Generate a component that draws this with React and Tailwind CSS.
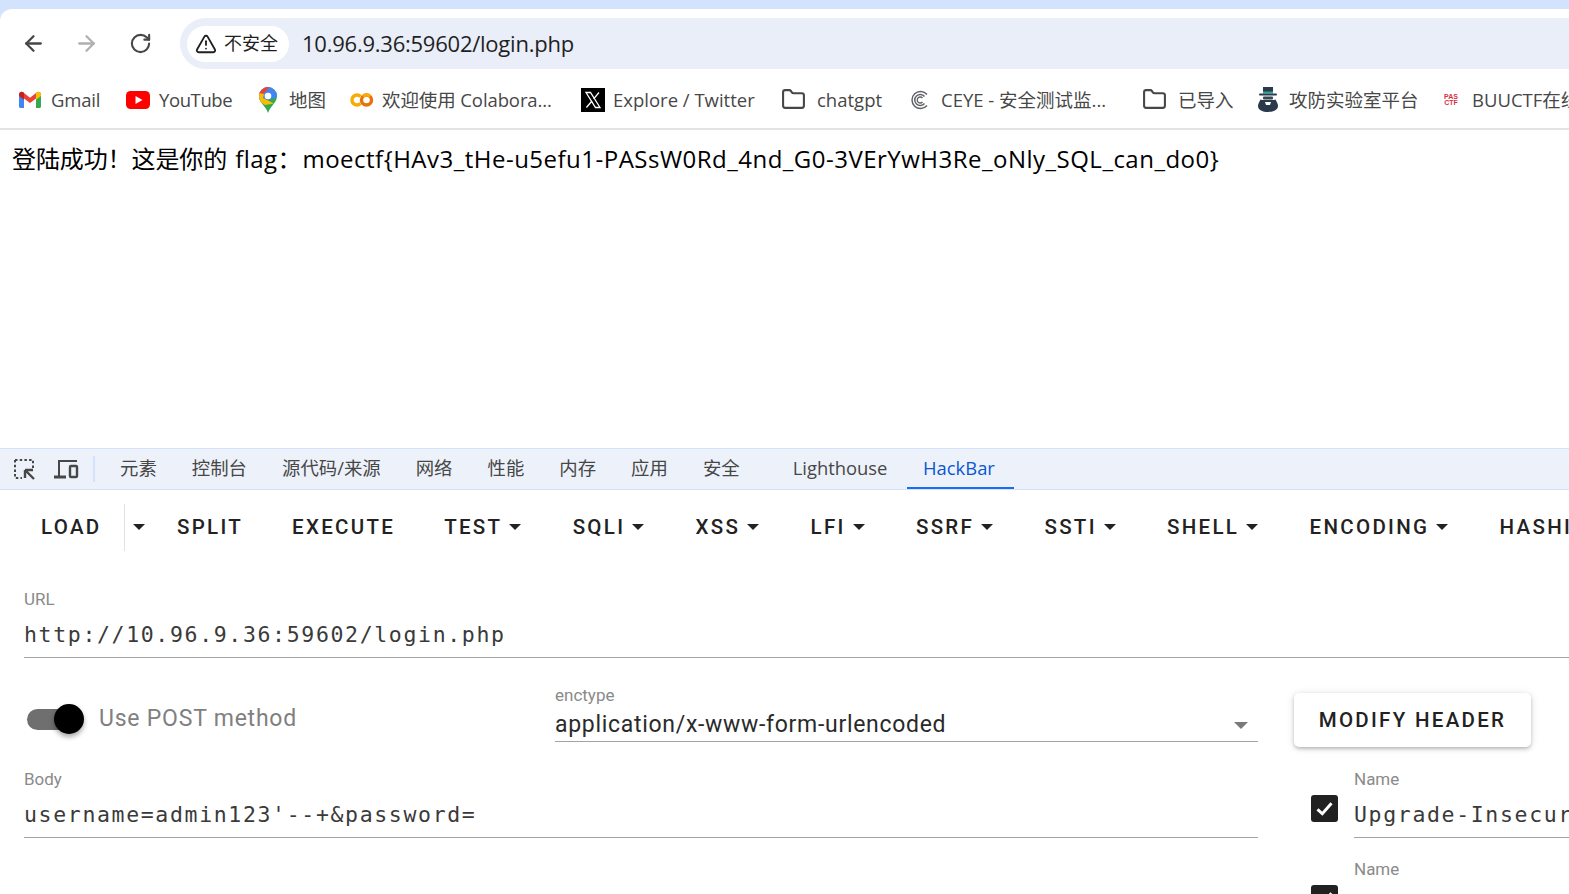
import React from "react";
import { ArrowLeft, ArrowRight, RotateCw, TriangleAlert, Folder } from "lucide-react";

const uiFont = "font-['Open_Sans','Noto_Sans_CJK_SC',sans-serif]";
const monoFont = "font-['DejaVu_Sans_Mono','Liberation_Mono',monospace]";

function GmailIcon() {
  return (
    <svg width="22" height="18" viewBox="0 0 22 18">
      <path d="M0 3.5C0 1 2.8 0 4.5 1.5L5 2v15H1.5C.7 17 0 16.300 0 15.500z" fill="#4285f4" />
      <path d="M22 3.500C22 1 19.200 0 17.500 1.500L17 2v15h3.500c.8 0 1.500-.7 1.500-1.500z" fill="#34a853" />
      <path d="M5 2l6 4.800L17 2v5.500l-6 4.500-6-4.500z" fill="#ea4335" />
      <path d="M17 2l.5-.5C19.200 0 22 1 22 3.500V5l-5 3.800z" fill="#fbbc04" />
      <path d="M5 2l-.5-.5C2.800 0 0 1 0 3.500V5l5 3.800z" fill="#c5221f" />
    </svg>
  );
}

function YoutubeIcon() {
  return (
    <svg width="24" height="18" viewBox="0 0 24 18">
      <rect width="24" height="18" rx="4.500" fill="#ff0000" />
      <path d="M9.500 5l7 4-7 4z" fill="#fff" />
    </svg>
  );
}

function MapsIcon() {
  return (
    <svg width="18" height="26" viewBox="0 0 18 26">
      <clipPath id="pin">
        <path d="M9 0a9 9 0 0 1 9 9c0 3-1.200 5-3 7.500-2.200 3-4.800 5.500-6 9.500-1.200-4-3.800-6.500-6-9.500C1.200 14 0 12 0 9a9 9 0 0 1 9-9z" />
      </clipPath>
      <g clipPath="url(#pin)">
        <rect width="18" height="26" fill="#34a853" />
        <path d="M0 0h18v10L0 16z" fill="#4285f4" />
        <path d="M0 0h11L2 9H0z" fill="#ea4335" />
        <path d="M0 6l5 1-1 4 11 5.500L6 18 0 14z" fill="#fbbc04" />
      </g>
      <circle cx="9" cy="9" r="3.300" fill="#fff" />
    </svg>
  );
}

function ColabIcon() {
  return (
    <svg width="24" height="14" viewBox="0 0 24 14" fill="none">
      <path d="M10.500 3.500A5 5 0 1 0 10.500 10.500" stroke="#f9ab00" strokeWidth="3.400" />
      <circle cx="16.500" cy="7" r="5" stroke="#e8710a" strokeWidth="3.400" />
      <path d="M13 3.500A5 5 0 0 1 20 3.500" stroke="#f9ab00" strokeWidth="3.400" />
    </svg>
  );
}

function XIcon() {
  return (
    <svg width="24" height="24" viewBox="0 0 24 24">
      <rect width="24" height="24" fill="#000" />
      <path d="M5 4.500h4.500l9.500 15h-4.500z" fill="none" stroke="#fff" strokeWidth="1.300" />
      <path d="M18 4.500l-5.300 6.300M11 13l-5.600 6.500" fill="none" stroke="#fff" strokeWidth="1.300" />
    </svg>
  );
}

function CeyeIcon() {
  return (
    <svg width="20" height="20" viewBox="0 0 20 20" fill="none" stroke="#5f6368">
      <path d="M17 4.500A8.500 8.500 0 1 0 17 15.500" strokeWidth="1.500" />
      <path d="M14.500 6.500A5.500 5.500 0 1 0 14.500 13.500" strokeWidth="1.500" />
      <path d="M12.500 8A3 3 0 1 0 12.500 12" strokeWidth="1.300" />
    </svg>
  );
}

function HackerIcon() {
  return (
    <svg width="20" height="25" viewBox="0 0 20 25">
      <rect x="5" y="0" width="10" height="6" fill="#2b3a4a" />
      <rect x="5" y="4.500" width="10" height="2" fill="#26a69a" />
      <rect x="1" y="6.500" width="18" height="2" rx="1" fill="#2b3a4a" />
      <rect x="5" y="9.500" width="10" height="3" rx="1" fill="#37474f" />
      <path d="M3 12c0 1 1 1 2 1h10c1 0 2 0 2-1 2 3 3 5 3 7 0 4-5 6-10 6S0 23 0 19c0-2 1-4 3-7z" fill="#2b3a4a" />
      <path d="M7 15h6l-1 3H8z" fill="#fff" />
    </svg>
  );
}

function BuuIcon() {
  return (
    <div className="flex w-[18px] flex-col items-center font-['Liberation_Sans',sans-serif] text-[7px] leading-[6px] font-bold text-[#d9303e]">
      <span>PAS</span>
      <span>CTF</span>
    </div>
  );
}

function Bookmark({ icon, label, iconBox, gap, ml, width }) {
  return (
    <div className={`flex shrink-0 items-center whitespace-nowrap ${ml}`}>
      <div className={`flex items-center justify-center ${iconBox}`}>{icon}</div>
      <span className={`${gap} ${width} text-[18.5px] text-[#474747]`}>{label}</span>
    </div>
  );
}

function Caret({ color = "border-t-[#222]" }) {
  return <span className={`inline-block h-0 w-0 border-x-[6px] border-t-[6px] border-x-transparent ${color}`} />;
}

function HackButton({ label, caret }) {
  return (
    <div className={`flex h-[51px] shrink-0 items-center gap-[7px] pl-[24.5px] whitespace-nowrap ${caret ? "pr-[26.8px]" : "pr-[24.5px]"}`}>
      <span>{label}</span>
      {caret && <Caret />}
    </div>
  );
}

function Tab({ label, ml = "ml-[35px]" }) {
  return <span className={`pb-[2px] ${ml}`}>{label}</span>;
}

function TextField({ label, value, className = "" }) {
  return (
    <div className={`h-[69px] border-b border-[#a3a3a3] ${className}`}>
      <div className="h-[21px] text-[17px] leading-[21px] text-[#8a8a8a]">{label}</div>
      <div className={`mt-[8px] h-[34px] overflow-hidden text-[21.5px] leading-[34px] tracking-[1.65px] whitespace-nowrap text-[#3a3a3a] ${monoFont}`}>
        {value}
      </div>
    </div>
  );
}

function HeaderRow({ value }) {
  return (
    <div className="flex h-[90px] w-[400px] items-start">
      <div className="mt-[26px] ml-[16.5px] flex h-[27px] w-[27px] shrink-0 items-center justify-center rounded-[3px] bg-[#212121]">
        <svg width="21" height="21" viewBox="0 0 24 24" fill="none" stroke="#fff" strokeWidth="3.400">
          <path d="M4 13l5.500 5L20 6" />
        </svg>
      </div>
      <TextField label="Name" value={value} className="ml-[16.5px] w-[300px] shrink-0" />
    </div>
  );
}

export default function App() {
  const folder = <Folder size={25} strokeWidth={2} className="text-[#474747]" />;
  return (
    <div className="h-[894px] w-full overflow-hidden bg-[#d3e3fd]">
      <div className="mt-[9px] h-[885px] overflow-hidden rounded-tl-[12px] bg-white">
        {/* browser toolbar */}
        <div className={`flex h-[69px] items-center ${uiFont}`}>
          <div className="flex w-[180px] shrink-0 items-center pb-[1px]">
            <ArrowLeft size={25} strokeWidth={2.200} className="ml-[21px] text-[#474747]" />
            <ArrowRight size={25} strokeWidth={2.200} className="ml-[28px] text-[#b0b0b0]" />
            <RotateCw size={23} strokeWidth={2.200} className="ml-[30px] text-[#474747]" />
          </div>
          <div className="flex h-[51px] flex-1 items-center rounded-l-full bg-[#e9eef8] pl-[7px]">
            <div className="flex h-[36px] w-[102px] items-center rounded-full bg-white pl-[8px]">
              <TriangleAlert size={22} strokeWidth={2} className="text-[#1f1f1f]" />
              <span className="ml-[7px] text-[18px] text-[#1f1f1f]">不安全</span>
            </div>
            <span className="ml-[13px] text-[22px] tracking-[-0.24px] text-[#1f1f1f]">10.96.9.36:59602/login.php</span>
          </div>
        </div>

        {/* bookmarks */}
        <div className={`flex h-[52px] items-center overflow-hidden border-b-[2px] border-[#e3e3e3] pb-[7px] pl-[19px] ${uiFont}`}>
          <Bookmark icon={<GmailIcon />} label="Gmail" iconBox="w-[22px]" gap="ml-[10px]" ml="" width="w-[50px] tracking-[-0.2px]" />
          <Bookmark icon={<YoutubeIcon />} label="YouTube" iconBox="w-[24px]" gap="ml-[9px]" ml="ml-[25px]" width="w-[73px] tracking-[-0.4px]" />
          <Bookmark icon={<MapsIcon />} label="地图" iconBox="w-[18px]" gap="ml-[12px]" ml="ml-[27px]" width="w-[37px]" />
          <Bookmark icon={<ColabIcon />} label="欢迎使用 Colabora..." iconBox="w-[24px]" gap="ml-[8px]" ml="ml-[24px]" width="w-[170px] tracking-[-0.1px]" />
          <Bookmark icon={<XIcon />} label="Explore / Twitter" iconBox="w-[24px]" gap="ml-[8px]" ml="ml-[29px]" width="w-[141px]" />
          <Bookmark icon={folder} label="chatgpt" iconBox="w-[25px]" gap="ml-[11px]" ml="ml-[27px]" width="w-[67px]" />
          <Bookmark icon={<CeyeIcon />} label="CEYE - 安全测试监..." iconBox="w-[20px]" gap="ml-[11px]" ml="ml-[26px]" width="w-[166px]" />
          <Bookmark icon={folder} label="已导入" iconBox="w-[25px]" gap="ml-[11px]" ml="ml-[35px]" width="w-[54px]" />
          <Bookmark icon={<HackerIcon />} label="攻防实验室平台" iconBox="w-[20px]" gap="ml-[11px]" ml="ml-[26px]" width="w-[127px]" />
          <Bookmark icon={<BuuIcon />} label="BUUCTF在线评测" iconBox="w-[18px]" gap="ml-[12px]" ml="ml-[26px]" width="w-[150px]" />
        </div>

        {/* page content */}
        <div className={`h-[318px] pt-[12px] pl-[12px] text-[24px] leading-[34px] tracking-[-0.1px] whitespace-nowrap text-black ${uiFont}`}>
          登陆成功！这是你的 <span className="ml-[2px] tracking-[0.46px]">flag</span>：<span className="ml-[1px] tracking-[0.49px]">moectf{"{"}HAv3_tHe-u5efu1-PASsW0Rd_4nd_G0-3VErYwH3Re_oNly_SQL_can_do0{"}"}</span>
        </div>

        {/* devtools tabs */}
        <div className={`flex h-[42px] items-center border-y border-[#d3e3fd] bg-[#edf2fa] text-[18.4px] text-[#474747] ${uiFont}`}>
          <svg width="24" height="24" viewBox="0 0 24 24" fill="none" stroke="#474747" strokeWidth="2" className="ml-[12px] shrink-0">
            <path d="M3 3h18v8M3 3v18h7" strokeDasharray="2.500 2.200" />
            <path d="M13 13h8M13 13v8M13 13l9 9" strokeWidth="2.400" />
          </svg>
          <svg width="26" height="22" viewBox="0 0 26 22" fill="none" stroke="#474747" strokeWidth="2" className="ml-[17px] shrink-0">
            <path d="M6 18V3h18" />
            <path d="M1 19h12" strokeWidth="3" />
            <rect x="17" y="8" width="7" height="11" rx="1" strokeWidth="2.400" />
          </svg>
          <div className="ml-[14px] h-[26px] w-[2px] bg-[#d3e3fd]" />
          <Tab label="元素" ml="ml-[25px]" />
          <Tab label="控制台" />
          <Tab label="源代码/来源" />
          <Tab label="网络" />
          <Tab label="性能" />
          <Tab label="内存" />
          <Tab label="应用" />
          <Tab label="安全" />
          <Tab label="Lighthouse" ml="ml-[53px]" />
          <div className="ml-[19.5px] flex h-full w-[107px] items-center justify-center border-b-[2px] border-[#1a6cf0] pr-[3px] pb-[1px] text-[#0b57d0]">
            HackBar
          </div>
        </div>

        {/* hackbar */}
        <div className="font-['Roboto',sans-serif]">
          <div className="flex h-[74px] items-center pl-[16.5px] text-[20.5px] font-medium tracking-[2.3px] text-[#222]">
            <div className="flex h-[47px] shrink-0 items-center border-r border-[#e2e2e2] pr-[22px] pl-[24.5px]">LOAD</div>
            <div className="flex h-[51px] w-[28px] shrink-0 items-center pl-[8px]">
              <Caret />
            </div>
            <HackButton label="SPLIT" />
            <HackButton label="EXECUTE" />
            <HackButton label="TEST" caret />
            <HackButton label="SQLI" caret />
            <HackButton label="XSS" caret />
            <HackButton label="LFI" caret />
            <HackButton label="SSRF" caret />
            <HackButton label="SSTI" caret />
            <HackButton label="SHELL" caret />
            <HackButton label="ENCODING" caret />
            <HackButton label="HASHING" caret />
          </div>

          <TextField label="URL" value="http://10.96.9.36:59602/login.php" className="mt-[25px] ml-[24px]" />

          <div className="mt-[27px] flex pl-[24px]">
            <div className="w-[1234px] shrink-0">
              <div className="flex h-[57px]">
                <div className="flex w-[531px] shrink-0 items-center pt-[11px]">
                  <div className="ml-[3px] flex h-[21px] w-[47px] items-center justify-end rounded-full bg-[#6f6f6f]">
                    <div className="-mr-[10px] h-[30px] w-[30px] shrink-0 rounded-full bg-black shadow-[0_3px_5px_rgba(0,0,0,0.35)]" />
                  </div>
                  <span className="ml-[25px] text-[23px] tracking-[0.78px] whitespace-nowrap text-[#808080]">Use POST method</span>
                </div>
                <div className="flex-1 border-b border-[#a3a3a3]">
                  <div className="h-[21px] text-[17px] leading-[21px] text-[#8a8a8a]">enctype</div>
                  <div className="mt-[5px] flex h-[28px] items-center justify-between pr-[10px] text-[23px] tracking-[0.7px] text-[#2a2a2a]">
                    <span>application/x-www-form-urlencoded</span>
                    <span className="inline-block h-0 w-0 border-x-[7px] border-t-[7px] border-x-transparent border-t-[#7a7a7a]" />
                  </div>
                </div>
              </div>
              <TextField label="Body" value="username=admin123'--+&password=" className="mt-[27px]" />
            </div>

            <div className="ml-[36px] shrink-0">
              <div className="mt-[8px] flex h-[54px] w-[237px] items-center justify-center rounded-[5px] bg-white text-[20.5px] font-medium tracking-[2.3px] whitespace-nowrap text-[#222] shadow-[0_2px_4px_-1px_rgba(0,0,0,0.3),0_1px_8px_rgba(0,0,0,0.12)]">
                MODIFY HEADER
              </div>
              <div className="mt-[22px]">
                <HeaderRow value="Upgrade-Insecure-Requests" />
                <HeaderRow value="" />
              </div>
            </div>
          </div>
        </div>
      </div>
    </div>
  );
}
